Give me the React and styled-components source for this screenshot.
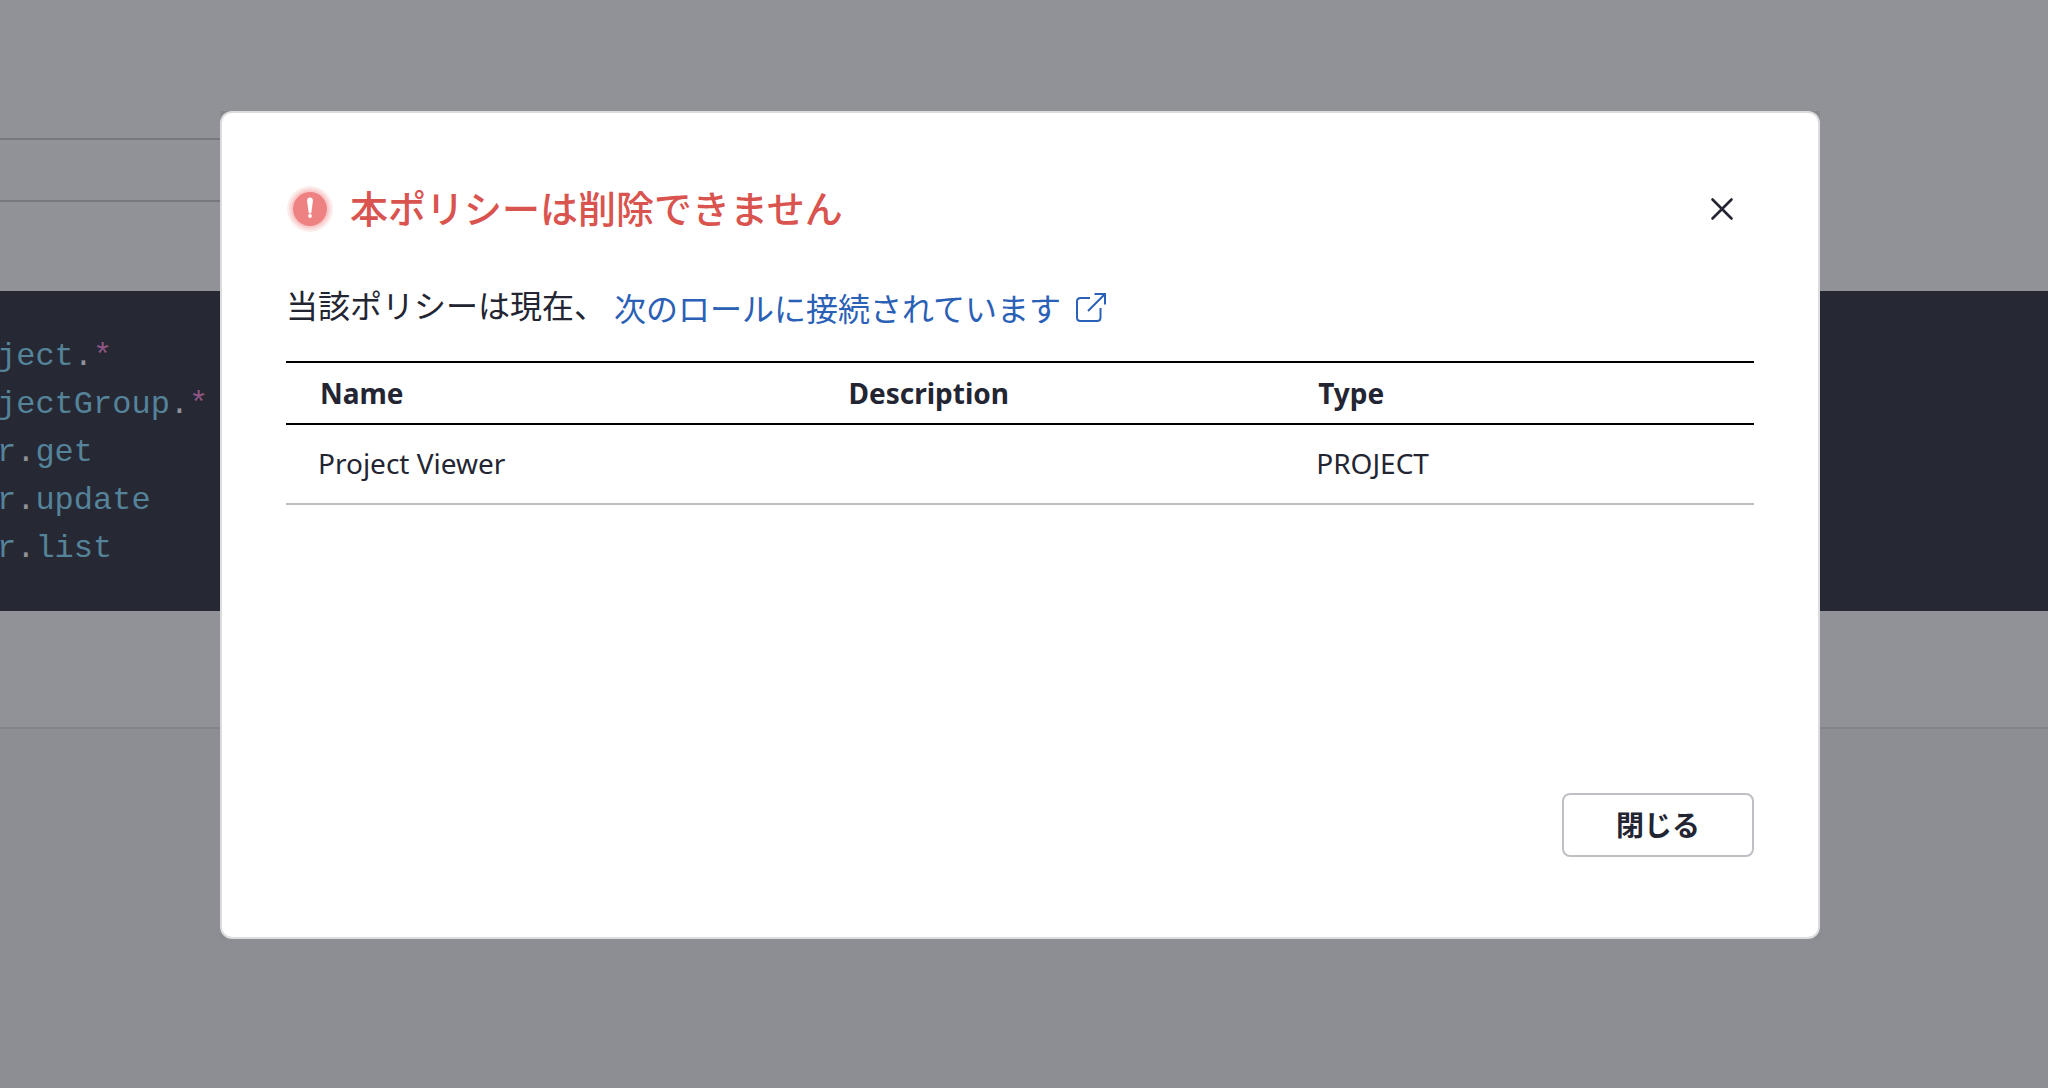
import React from "react";
import styled, { createGlobalStyle } from "styled-components";

const GlobalStyle = createGlobalStyle`
  *, *::before, *::after { box-sizing: border-box; }
  body {
    margin: 0;
    background: #8d8e93;
    color: #232533;
    font-family: "Noto Sans", "Noto Sans CJK JP", sans-serif;
  }
`;

const Page = styled.div`
  position: relative;
  min-height: 100vh;
  overflow: hidden;
`;

const PolicyPanel = styled.main`
  padding: 138px 0 116px;
  background: #919297;
  border-bottom: 2px solid #838489;
`;

const PanelStrip = styled.div`
  width: 60%;
  height: 64px;
  margin-bottom: 89px;
  border: solid #77787e;
  border-width: 2px 0;
`;

const Editor = styled.pre`
  margin: 0;
  padding: 42px 0 38px;
  background: #262833;
  overflow: hidden;
`;

const CodeLine = styled.code`
  display: block;
  margin-left: -3px;
  color: #55839a;
  font: 32px/48px "Liberation Mono", monospace;
`;

const Dot = styled.span`
  color: #919297;
`;

const Star = styled.span`
  color: #8f5584;
`;

const Overlay = styled.div`
  position: absolute;
  inset: 0;
  display: flex;
  align-items: flex-start;
  padding: 111px 228px 0 220px;
`;

const DialogFrame = styled.div`
  flex: 1;
  background: #88898e;
`;

const Dialog = styled.section`
  padding: 72px 64px 80px;
  background: #fff;
  border: 2px solid #dcdcdf;
  border-radius: 12px;
`;

const Header = styled.header`
  display: flex;
  align-items: center;
  gap: 16px;
  height: 48px;
`;

const Title = styled.h1`
  flex: 1;
  margin: 0;
  padding-bottom: 4px;
  color: #d9534f;
  font-family: "Noto Sans CJK JP", sans-serif;
  font-size: 38px;
  font-weight: 500;
  line-height: 48px;
`;

const CloseIconButton = styled.button`
  display: flex;
  align-items: center;
  justify-content: center;
  width: 64px;
  height: 48px;
  padding: 0;
  border: 0;
  background: none;
  color: #232533;
  cursor: pointer;
`;

const Message = styled.div`
  display: flex;
  align-items: flex-start;
  gap: 8px;
  margin: 51px 0 27px;
  font-size: 32px;
`;

const Lead = styled.p`
  margin: 0;
  line-height: 44px;
`;

const RoleLink = styled.a`
  display: flex;
  align-items: center;
  gap: 15px;
  color: #2a60b5;
  line-height: 50px;
  text-decoration: none;
`;

const TableArea = styled.div`
  min-height: 432px;
`;

const RoleTable = styled.table`
  width: 100%;
  table-layout: fixed;
  border-collapse: separate;
  border-spacing: 0;
  font-size: 28px;
  line-height: 40px;
`;

const HeadCell = styled.th`
  width: ${(p) => p.$width};
  height: 64px;
  padding: 0 34px;
  border: solid #000;
  border-width: 2px 0;
  text-align: left;
  font-weight: 700;
`;

const Cell = styled.td`
  height: 80px;
  padding: 0 32px 2px;
  border-bottom: 2px solid #bfbfc4;
`;

const Footer = styled.footer`
  display: flex;
  justify-content: flex-end;
`;

const CloseButton = styled.button`
  width: 192px;
  height: 64px;
  padding: 0 0 2px;
  border: 2px solid #bfbfc6;
  border-radius: 8px;
  background: #fff;
  color: #232533;
  font-family: inherit;
  font-size: 28px;
  font-weight: 700;
  cursor: pointer;
`;

const AlertIcon = () => (
  <svg width="48" height="48" viewBox="0 0 48 48" aria-hidden="true">
    <circle cx="24" cy="24" r="23" fill="#fdeeee" />
    <circle cx="24" cy="24" r="21" fill="#fbdcdc" />
    <circle cx="24" cy="24" r="19" fill="#f8c8c8" />
    <circle cx="24" cy="24" r="17" fill="#ee8282" />
    <path d="M24 12.6c-1.9 0-3.1 1.3-2.9 3.300l1.500 11.300c.1.900.6 1.400 1.400 1.400s1.300-.5 1.400-1.400l1.500-11.300c.2-2-1-3.300-2.900-3.300z" fill="#fff" />
    <circle cx="24" cy="31" r="1.900" fill="#fff" />
  </svg>
);

const CrossIcon = () => (
  <svg width="24" height="24" viewBox="0 0 24 24" fill="none" stroke="currentColor" strokeWidth="2.6" strokeLinecap="round" aria-hidden="true">
    <path d="M2.500 2.500l19 19M21.500 2.500l-19 19" />
  </svg>
);

const ExternalIcon = () => (
  <svg width="32" height="32" viewBox="0 0 32 32" fill="none" stroke="currentColor" strokeWidth="2" aria-hidden="true">
    <path d="M14 5H4.500Q1 5 1 8.500V24.500Q1 28 4.500 28H21Q24.500 28 24.500 24.500V15" />
    <path d="M18.500 1H29V11.500M29 1L12 18" />
  </svg>
);

const actions = [
  ["ject", "*"],
  ["jectGroup", "*"],
  ["r", "get"],
  ["r", "update"],
  ["r", "list"],
];

const columns = [
  { label: "Name", width: "36%" },
  { label: "Description", width: "32%" },
  { label: "Type", width: "32%" },
];

const roles = [{ name: "Project Viewer", description: "", type: "PROJECT" }];

export default function App() {
  return (
    <>
      <GlobalStyle />
      <Page lang="ja">
        <PolicyPanel>
          <PanelStrip />
          <Editor>
            {actions.map(([resource, verb]) => (
              <CodeLine key={resource + verb}>
                {resource}
                <Dot>.</Dot>
                {verb === "*" ? <Star>*</Star> : verb}
              </CodeLine>
            ))}
          </Editor>
        </PolicyPanel>
        <Overlay>
          <DialogFrame>
            <Dialog role="dialog" aria-modal="true" aria-labelledby="dialog-title">
              <Header>
                <AlertIcon />
                <Title id="dialog-title">本ポリシーは削除できません</Title>
                <CloseIconButton type="button" aria-label="閉じる">
                  <CrossIcon />
                </CloseIconButton>
              </Header>
              <Message>
                <Lead>当該ポリシーは現在、</Lead>
                <RoleLink href="#roles">
                  次のロールに接続されています
                  <ExternalIcon />
                </RoleLink>
              </Message>
              <TableArea>
                <RoleTable>
                  <thead>
                    <tr>
                      {columns.map((c) => (
                        <HeadCell key={c.label} scope="col" $width={c.width}>
                          {c.label}
                        </HeadCell>
                      ))}
                    </tr>
                  </thead>
                  <tbody>
                    {roles.map((r) => (
                      <tr key={r.name}>
                        <Cell>{r.name}</Cell>
                        <Cell>{r.description}</Cell>
                        <Cell>{r.type}</Cell>
                      </tr>
                    ))}
                  </tbody>
                </RoleTable>
              </TableArea>
              <Footer>
                <CloseButton type="button">閉じる</CloseButton>
              </Footer>
            </Dialog>
          </DialogFrame>
        </Overlay>
      </Page>
    </>
  );
}
